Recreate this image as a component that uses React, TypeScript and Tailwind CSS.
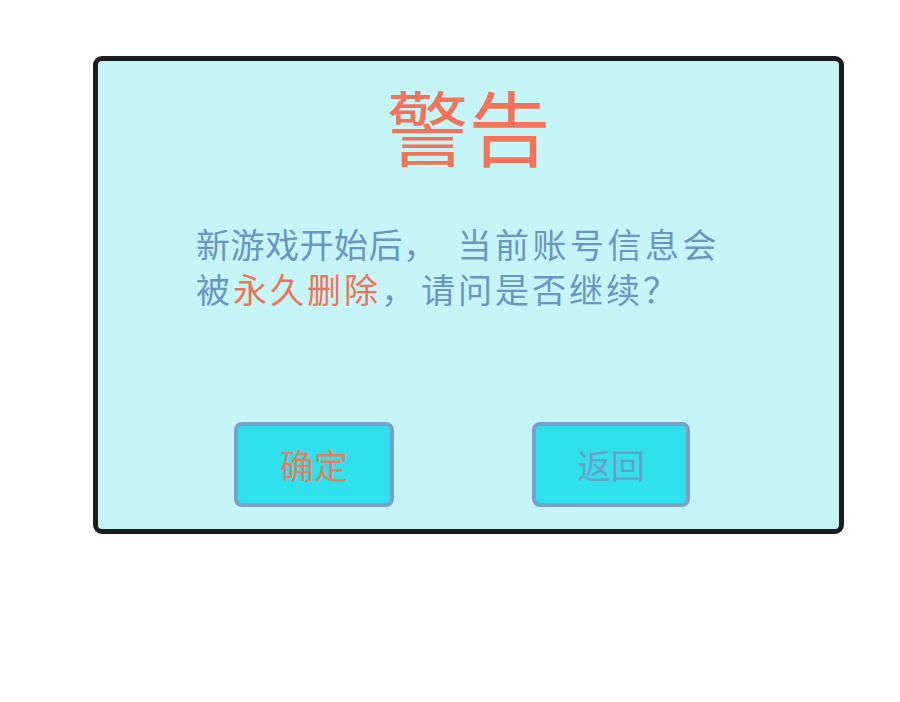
export default function App() {
  const cjk = { fontFamily: '"Noto Sans CJK SC", "Noto Sans", sans-serif' };
  return (
    <div className="w-[900px] h-[702px] bg-white pt-[56px] pl-[93px]" style={cjk}>
      <div className="w-[751px] h-[478px] rounded-[9px] border-[5px] border-[#1c1c1e] bg-[#c6f5f8] flex flex-col">
        <h1 className="mt-[23px] text-center text-[82px] leading-none font-normal text-[#f3725a]">
          警告
        </h1>
        <p className="mt-[55px] ml-[98px] text-[34px] leading-[45px] text-[#6b95c4]">
          <span className="tracking-[0.5px]">新游戏开始后，</span>
          <span className="inline-block w-[20px]" />
          <span className="tracking-[3.5px]">当前账号信息会</span>
          <br />
          <span className="tracking-[3px]">
            被<span className="text-[#f07556]">永久删除</span>，<span className="inline-block w-[3px]" />请问是否继续？
          </span>
        </p>
        <div className="mt-auto mb-[22px] ml-[136px] flex gap-[138px]">
          <button className="w-[160px] h-[85px] rounded-[8px] border-[4px] border-[#7a9fcd] bg-[#2ee1ed] text-[34px] text-[#e67d5c] leading-none">
            确定
          </button>
          <button className="w-[158px] h-[85px] rounded-[8px] border-[4px] border-[#7a9fcd] bg-[#2ee1ed] text-[34px] text-[#6d9dcb] leading-none">
            返回
          </button>
        </div>
      </div>
    </div>
  );
}
